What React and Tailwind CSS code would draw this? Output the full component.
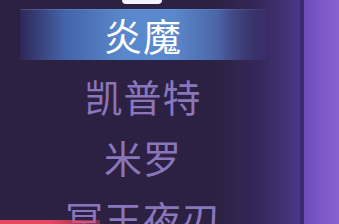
import React from "react";

const names = ["凯普特", "米罗", "冥王夜刃"];

export default function App() {
  return (
    <div
      className="relative flex w-[339px] h-[224px] overflow-hidden bg-[#2d2143]"
      style={{ fontFamily: '"Noto Sans CJK SC", "Noto Sans", sans-serif' }}
    >
      {/* list column */}
      <div className="relative w-[300px] shrink-0 flex flex-col">
        <div className="shrink-0 w-[40px] h-[4px] ml-[122px] bg-[#f4f2fb] rounded-b-sm" />

        <div className="h-[61px] shrink-0 flex">
          <div className="flex-none w-[246px] ml-[20px] my-[5px] flex items-center justify-center border-t border-[#7fa3dd]/30 bg-[linear-gradient(90deg,#2f2757_0%,#4463a8_18%,#5a88cc_42%,#5b89cd_62%,#4a62a3_82%,#332d60_100%)]">
            <span className="text-[38px] leading-none text-white tracking-[1px]">炎魔</span>
          </div>
        </div>

        {names.map((n) => (
          <div key={n} className="h-[61px] shrink-0 w-[286px] flex items-center justify-center">
            <span className="text-[38px] leading-none text-[#8a76bb] tracking-[1px]">{n}</span>
          </div>
        ))}

        {/* right fade into side panel */}
        <div className="absolute top-0 bottom-0 right-0 w-[85px] bg-gradient-to-r from-transparent via-[#3a2b66]/60 to-[#4c3788] pointer-events-none" />
      </div>

      {/* divider */}
      <div className="w-[4px] shrink-0 bg-[#3b2a6c]" />

      {/* side panel */}
      <div className="flex-1 bg-gradient-to-r from-[#6e4bbb] via-[#7c58c6] to-[#8662ce]" />

      {/* red progress bar */}
      <div className="absolute left-0 bottom-0 w-[100px] h-[4px] bg-gradient-to-r from-[#e8485f] via-[#e8485f] to-[#e8485f]/40" />
    </div>
  );
}
